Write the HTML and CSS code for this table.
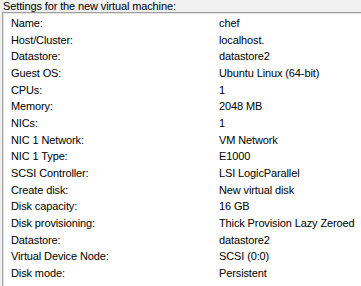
FILE: index.html
```html
<!DOCTYPE html>
<html lang="en">
<head>
  <meta charset="UTF-8" />
  <title>Ready to Complete</title>
  <link rel="stylesheet" href="styles.css">
</head>
<body>

  <div class="caption">Settings for the new virtual machine:</div>

  <div class="summary">
    <div class="row"><span class="label">Name:</span><span class="value">chef</span></div>
    <div class="row"><span class="label">Host/Cluster:</span><span class="value">localhost.</span></div>
    <div class="row"><span class="label">Datastore:</span><span class="value">datastore2</span></div>
    <div class="row"><span class="label">Guest OS:</span><span class="value">Ubuntu Linux (64-bit)</span></div>
    <div class="row"><span class="label">CPUs:</span><span class="value">1</span></div>
    <div class="row"><span class="label">Memory:</span><span class="value">2048 MB</span></div>
    <div class="row"><span class="label">NICs:</span><span class="value">1</span></div>
    <div class="row"><span class="label">NIC 1 Network:</span><span class="value">VM Network</span></div>
    <div class="row"><span class="label">NIC 1 Type:</span><span class="value">E1000</span></div>
    <div class="row"><span class="label">SCSI Controller:</span><span class="value">LSI LogicParallel</span></div>
    <div class="row"><span class="label">Create disk:</span><span class="value">New virtual disk</span></div>
    <div class="row"><span class="label">Disk capacity:</span><span class="value">16 GB</span></div>
    <div class="row"><span class="label">Disk provisioning:</span><span class="value">Thick Provision Lazy Zeroed</span></div>
    <div class="row"><span class="label">Datastore:</span><span class="value">datastore2</span></div>
    <div class="row"><span class="label">Virtual Device Node:</span><span class="value">SCSI (0:0)</span></div>
    <div class="row"><span class="label">Disk mode:</span><span class="value">Persistent</span></div>
  </div>

</body>
</html>
```

FILE: styles.css
```css
body {
  margin: 0;
  background: #f0f0f0;
  height: 286px;
  overflow: hidden;
  display: flex;
  flex-direction: column;
  font-family: 'Liberation Sans', Arial, sans-serif;
  font-size: 11px;
  letter-spacing: -0.12px;
  color: #000;
}

.caption {
  height: 12px;
  line-height: 12px;
  padding-left: 3px;
  white-space: nowrap;
}

.summary {
  flex-grow: 1;
  margin-left: 2px;
  background: #fff;
  border-top: 1px solid #a0a0a0;
  border-left: 1px solid #a0a0a0;
  box-shadow: inset 1px 1px 0 #e3e3e3;
  padding: 2px 0 0 8px;
}

.row {
  display: grid;
  grid-template-columns: 208px 1fr;
  height: 16.67px;
  line-height: 16.67px;
  white-space: nowrap;
}
```
